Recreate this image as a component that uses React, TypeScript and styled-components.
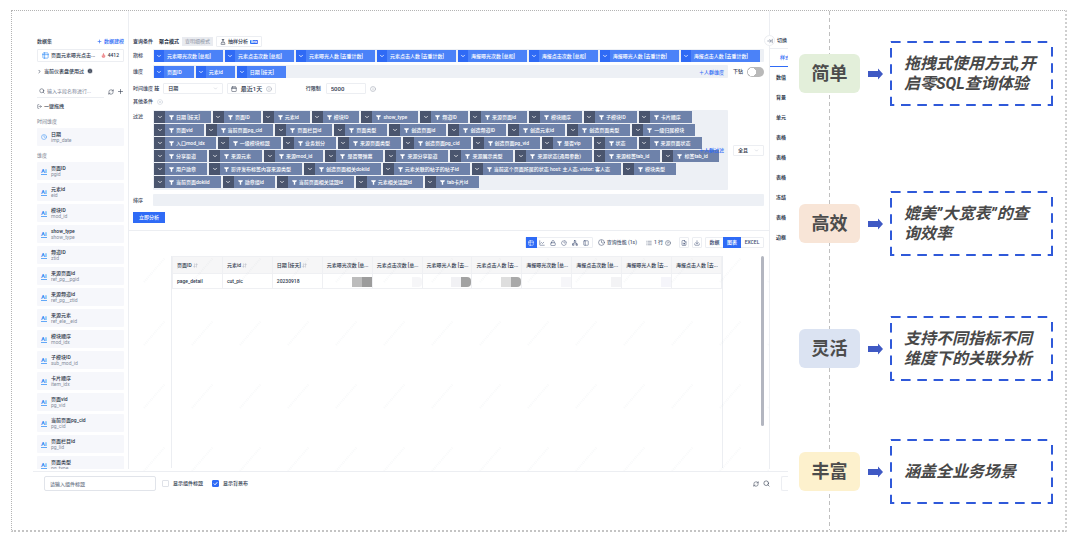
import React from "react";
import styled, { createGlobalStyle, css } from "styled-components";
import {
  Lock, Calendar, ChartLine, ChartPie, ChevronDown, ChevronRight, CircleHelp, CircleX, Clock, Download,
  FileSearch, FlaskConical, Flame, Info, LogOut, PanelLeft, Plus, RefreshCw, Search, Table2, ArrowRightToLine,
  ArrowDownUp, Network, List,
} from "lucide-react";

const GlobalStyle = createGlobalStyle`
  * { box-sizing: border-box; }
  body {
    margin: 0;
    background: #fff;
    color: #303a4e;
    font: 500 5px/7px Roboto, "Noto Sans CJK SC", sans-serif;
  }
  button, input, select { font: inherit; color: inherit; margin: 0; padding: 0; border: 0; background: none; }
  svg { flex: none; display: block; }
`;

const blue = "#2f6bf6";
const line = "#eceef2";

const Frame = styled.main`
  display: flex;
  height: calc(100vh - 24px);
  min-height: 522px;
  margin: 10px 13px 14px 11px;
  border: 1px dotted #b4b4b4;
  border-right: 2px dotted #cfcfcf;
  border-bottom: 2px dotted #c4c4c4;
`;

const Product = styled.section`
  flex: 1;
  min-width: 0;
  display: flex;
  flex-direction: column;
  padding-left: 21px;
`;

const Workspace = styled.div`
  flex: 1;
  min-height: 0;
  display: flex;
`;

/* ---------- field list ---------- */

const Sidebar = styled.aside`
  flex: none;
  width: 96px;
  padding: 25px 4px 0;
  border-right: 1px solid ${line};
  display: flex;
  flex-direction: column;
  min-height: 0;
  margin-bottom: 2px;
  overflow: hidden;
`;

const SideRow = styled.div<{ $h: number; $top?: number }>`
  flex: none;
  display: flex;
  align-items: center;
  gap: 3px;
  height: ${(p) => p.$h}px;
  margin-top: ${(p) => p.$top ?? 0}px;
`;

const Push = styled.span`
  margin-left: auto;
`;

const LinkButton = styled.button`
  display: flex;
  align-items: center;
  gap: 2px;
  color: ${blue};
  white-space: nowrap;
`;

const PlainButton = styled.button`
  display: flex;
  align-items: center;
  gap: 2px;
  white-space: nowrap;
`;

const Dataset = styled(SideRow)`
  border: 1px solid ${line};
  border-radius: 1px;
  padding: 0 4px;
  gap: 2px;
`;

const SearchBox = styled.label`
  display: flex;
  align-items: center;
  gap: 2px;
  width: 67px;
  height: 100%;
  padding-left: 2px;
  border-bottom: 1px solid ${line};
  input { width: 100%; min-width: 0; outline: 0; font-weight: 400; }
  input::placeholder { color: #7b8496; }
`;

const GroupName = styled.h3`
  flex: none;
  margin: 6px 0 3px;
  font: inherit;
  font-weight: 400;
  color: #6d7687;
`;

const FieldList = styled.ul`
  display: flex;
  flex-direction: column;
  gap: 3px;
  margin: 0;
  padding: 0;
  list-style: none;
`;

const Field = styled.button`
  display: flex;
  align-items: center;
  gap: 4px;
  width: 100%;
  height: 18px;
  padding-left: 4px;
  border-radius: 1px;
  background: #f6f7fb;
  text-align: left;
  color: #2b3446;
  line-height: 6px;
  small { display: block; font-size: 5px; font-weight: 400; color: #858d9c; }
`;

const TypeMark = styled.span`
  width: 6px;
  border-bottom: 1px solid #62a8f7;
  color: #3a92f5;
  font-weight: 700;
  font-size: 6px;
  line-height: 6px;
`;

const IconSlot = styled.span`
  width: 6px;
  color: #3a92f5;
`;

/* ---------- query builder ---------- */

const Builder = styled.section`
  flex: 1;
  min-width: 0;
  display: flex;
  flex-direction: column;
  padding-top: 25px;
`;

const Row = styled.div<{ $h?: number; $top?: number }>`
  flex: none;
  display: flex;
  align-items: center;
  min-height: ${(p) => p.$h ?? 13}px;
  margin-top: ${(p) => p.$top ?? 3}px;
  padding: 0 5px 0 4px;
`;

const RowName = styled.span<{ $topAligned?: boolean }>`
  flex: none;
  width: 20px;
  white-space: nowrap;
  color: #3d475b;
  ${(p) => p.$topAligned && css`align-self: flex-start; padding-top: 3px;`}
`;

const Track = styled.div<{ $h?: number }>`
  flex: 1;
  min-width: 0;
  display: flex;
  flex-wrap: wrap;
  align-content: flex-start;
  gap: 1px 2px;
  min-height: ${(p) => p.$h ?? 13}px;
  padding: 1px 1px 0;
  background: #edf0f5;
  border-radius: 1px;
  position: relative;
`;

const Tag = styled.span<{ $filter?: boolean }>`
  flex: none;
  display: flex;
  align-items: center;
  height: 12px;
  background: ${(p) => (p.$filter ? "#6e82aa" : "#4b82f8")};
  color: #fff;
  white-space: nowrap;
  padding-right: ${(p) => (p.$filter ? 11 : 12)}px;
  gap: ${(p) => (p.$filter ? 2 : 0)}px;
  button {
    display: grid;
    place-items: center;
    align-self: stretch;
    width: ${(p) => (p.$filter ? 11 : 10)}px;
    margin-right: ${(p) => (p.$filter ? 2 : 3)}px;
    background: ${(p) => (p.$filter ? "#4a556e" : "#2f6af5")};
  }
`;

const CrowdLink = styled.button`
  position: absolute;
  right: 4px;
  top: 50%;
  transform: translateY(-50%);
  color: ${blue};
  white-space: nowrap;
`;

const Aside = styled.div`
  flex: none;
  display: flex;
  align-items: center;
  justify-content: space-between;
  width: 36px;
  padding-left: 5px;
  white-space: nowrap;
`;

const Switch = styled.input`
  appearance: none;
  width: 17px;
  height: 10px;
  border-radius: 5px;
  background: radial-gradient(circle at 5px 5px, #fff 4px, transparent 4px) #b9b9b9;
`;

const Tab = styled.button<{ $muted?: boolean }>`
  height: 9px;
  padding: 0 3px;
  white-space: nowrap;
  color: ${(p) => (p.$muted ? "#8d94a3" : "#222b3d")};
  background: ${(p) => (p.$muted ? "#e9ebf0" : "#fff")};
  font-weight: ${(p) => (p.$muted ? 400 : 700)};
`;

const Outlined = styled.button<{ $large?: boolean }>`
  display: flex;
  align-items: center;
  gap: 2px;
  height: 11px;
  padding: 0 3px;
  border: 1px solid ${line};
  border-radius: 1px;
  white-space: nowrap;
  font-size: ${(p) => (p.$large ? 6 : 5)}px;
`;

const Beta = styled.em`
  padding: 0 1px;
  border-radius: 1px;
  background: ${blue};
  color: #fff;
  font: 700 3px/4px Roboto, sans-serif;
`;

const SelectBox = styled.label<{ $w: number }>`
  display: flex;
  align-items: center;
  width: ${(p) => p.$w}px;
  height: 11px;
  padding: 0 4px;
  border: 1px solid ${line};
  border-radius: 1px;
  color: #b5bbc7;
  select { flex: 1; min-width: 0; appearance: none; outline: 0; color: #2b3446; font-size: 5px; }
`;

const Limit = styled.label`
  display: flex;
  align-items: center;
  gap: 5px;
  margin: 0 4px 0 30px;
  white-space: nowrap;
  input { width: 40px; height: 11px; padding-left: 4px; border: 1px solid ${line}; border-radius: 1px; font-size: 6px; }
`;

const Run = styled.button`
  width: 32px;
  height: 11px;
  background: ${blue};
  color: #fff;
`;

/* ---------- result ---------- */

const Result = styled.div`
  flex: 1;
  min-height: 0;
  display: flex;
  flex-direction: column;
  gap: 8px;
  margin-top: 7px;
  padding: 6px 5px 3px 4px;
  border-top: 1px solid ${line};
  position: relative;
`;

const Watermark = styled.svg`
  position: absolute;
  left: 0;
  top: 26px;
  width: 100%;
  height: calc(100% - 26px);
  pointer-events: none;
`;

const Toolbar = styled.div`
  flex: none;
  display: flex;
  justify-content: flex-end;
  align-items: center;
  height: 11px;
  white-space: nowrap;
  color: #4d5a75;
`;

const Segments = styled.div`
  display: flex;
  height: 11px;
  border: 1px solid ${line};
  border-radius: 1px;
`;

const Segment = styled.button<{ $on?: boolean; $w: number }>`
  display: grid;
  place-items: center;
  width: ${(p) => p.$w}px;
  height: 11px;
  margin-top: -1px;
  background: ${(p) => (p.$on ? blue : "transparent")};
  color: ${(p) => (p.$on ? "#fff" : "#3c4c72")};
`;

const Note = styled.span<{ $left: number }>`
  display: flex;
  align-items: center;
  gap: 2px;
  margin-left: ${(p) => p.$left}px;
`;

const Spaced = styled.div<{ $left: number }>`
  margin-left: ${(p) => p.$left}px;
`;

const Scroller = styled.div`
  flex: 1;
  min-height: 0;
  display: flex;
  justify-content: space-between;
  padding-left: 38px;
`;

const Sheet = styled.div`
  flex: 1;
  margin-right: 38px;
  border: solid ${line};
  border-width: 0 1px;
  min-width: 0;
`;

const Thumb = styled.div`
  flex: none;
  width: 3px;
  height: 80%;
  border-radius: 2px;
  background: #b3b6c0;
`;

const Table = styled.table`
  width: 100%;
  table-layout: fixed;
  border-collapse: collapse;
  th, td {
    padding: 0 0 0 4px;
    border: 1px solid #eff0f3;
    text-align: left;
    white-space: nowrap;
    overflow: hidden;
  }
  th { height: 17px; background: #f6f6f7; font-weight: 500; }
  td { height: 15px; }
  svg { display: inline-block; vertical-align: -1px; color: #a3a9b5; }
`;

const Masked = styled.span<{ $from: string; $to: string; $round?: boolean }>`
  display: block;
  width: 20px;
  height: 10px;
  margin: 1px 0 0 auto;
  border-radius: ${(p) => (p.$round ? "0 4px 4px 0" : "0")};
  background: linear-gradient(90deg, ${(p) => p.$from} 50%, ${(p) => p.$to} 50%);
`;

/* ---------- style panel ---------- */

const Panel = styled.aside`
  flex: none;
  width: 19px;
  margin-bottom: 2px;
  border-left: 1px solid ${line};
  position: relative;
`;

const Collapse = styled.button`
  position: absolute;
  left: -6px;
  top: 24px;
  display: grid;
  place-items: center;
  width: 11px;
  height: 11px;
  border: 1px solid ${line};
  border-radius: 50%;
  background: #fff;
  color: #4d5a75;
`;

const PanelClip = styled.div`
  overflow: hidden;
  white-space: nowrap;
  padding-top: 25px;
`;

const PanelTitle = styled.div`
  height: 13px;
  padding: 1px 0 0 7px;
  border-bottom: 1px solid ${line};
`;

const PanelTab = styled.button`
  display: block;
  width: 100%;
  height: 18px;
  padding-left: 10px;
  border-bottom: 1px solid ${blue};
  color: ${blue};
  text-align: left;
`;

const PanelList = styled.ul`
  display: grid;
  gap: 13px;
  margin: 0;
  padding: 7px 0 0 6px;
  list-style: none;
  font-weight: 700;
`;

/* ---------- footer ---------- */

const Footer = styled.footer`
  flex: none;
  display: flex;
  align-items: flex-start;
  height: 59px;
  padding: 4px 0 0 11px;
  border-top: 1px solid ${line};
`;

const TitleInput = styled.input`
  width: 112px;
  height: 15px;
  padding-left: 5px;
  border: 1px solid #e1e4ea;
  border-radius: 2px;
  &::placeholder { color: #6d7687; }
`;

const Check = styled.label`
  display: flex;
  align-items: center;
  gap: 4px;
  height: 15px;
  margin-left: 6px;
  & + & { margin-left: 9px; }
  span { position: relative; display: grid; place-items: center; }
  svg { position: absolute; color: #fff; }
  input { appearance: none; width: 7px; height: 7px; border: 1px solid #dfe2e8; border-radius: 1px; }
  input:checked { border-color: ${blue}; background: ${blue}; }
`;

const FooterIcons = styled.div`
  display: flex;
  align-items: center;
  gap: 4px;
  height: 15px;
  margin-left: auto;
  button { display: block; }
`;

const Stub = styled.span`
  width: 7px;
  height: 15px;
  margin-left: 11px;
  border: 1px solid ${line};
  border-right: 0;
  border-radius: 2px 0 0 2px;
`;

/* ---------- callouts ---------- */

const Callouts = styled.section`
  flex: none;
  width: 277px;
  display: flex;
  flex-direction: column;
  padding: 30px 12px 0 11px;
  background: repeating-linear-gradient(#bfbfbf 0 4px, transparent 4px 7px) 41px 0 / 1px 100% no-repeat;
`;

const Callout = styled.div<{ $top?: number }>`
  display: flex;
  align-items: center;
  height: 65px;
  margin-top: ${(p) => p.$top ?? 0}px;
`;

const Pill = styled.h2<{ $bg: string }>`
  flex: none;
  display: flex;
  justify-content: center;
  width: 61px;
  height: 39px;
  margin: 0;
  padding-top: 6px;
  border-radius: 6px;
  background: ${(p) => p.$bg};
  color: #4c4c4c;
  font: 700 18px/24px "Noto Sans CJK SC", sans-serif;
`;

const Arrow = styled.svg`
  margin: 0 7px 0 8px;
`;

const Quote = styled.p`
  flex: 1;
  display: flex;
  align-items: center;
  height: 65px;
  margin: 0;
  padding-left: 14px;
  white-space: pre-line;
  color: #484848;
  font: italic 700 16px/20px Roboto, "Noto Sans CJK SC", sans-serif;
  background:
    linear-gradient(90deg, #2f59d9 60%, transparent 60%) 1px 0 / 10% 2px repeat-x,
    linear-gradient(90deg, #2f59d9 60%, transparent 60%) 11px 100% / 10% 2px repeat-x,
    linear-gradient(#2f59d9 60%, transparent 60%) 0 7px / 2px 25% repeat-y,
    linear-gradient(#2f59d9 60%, transparent 60%) 100% 6px / 2px 25% repeat-y;
`;

const metrics = [
  "元素曝光次数 [总和]", "元素点击次数 [总和]", "元素曝光人数 [去重计数]", "元素点击人数 [去重计数]",
  "海报曝光次数 [总和]", "海报点击次数 [总和]", "海报曝光人数 [去重计数]", "海报点击人数 [去重计数]",
];
const dimensions = ["页面ID", "元素id", "日期 [按天]"];
const filters = [
  "日期 [按天]", "页面ID", "元素id", "模块ID", "show_type", "频道ID", "来源页面id", "模块顺序", "子模块ID", "卡片顺序",
  "页面vid", "当前页面pg_cid", "页面栏目id", "页面类型", "创造页面id", "创造频道ID", "创造元素id", "创造页面类型", "一级归属模块",
  "入口mod_idx", "一级模块标题", "业务划分", "来源页面类型", "创造页面pg_cid", "创造页面pg_vid", "是否vip", "状态", "来源页面状态",
  "分享渠道", "来源元素", "来源mod_id", "是否带弹幕", "来源分享渠道", "来源展示类型", "来源状态(通用参数)", "来源标签tab_id", "标签tab_id",
  "用户勋章", "影评发布标签内容来源类型", "创造页面相关dokiid", "元素关联的帖子的帖子id", "当前这个页面所属的状态 host: 主人态, vistor: 客人态", "模块类型",
  "当前页面dokiid", "勋章组id", "当前页面相关话题id", "元素相关话题id", "tab卡片id",
];
const fields: [string, string][] = [
  ["页面ID", "pgid"], ["元素id", "eid"], ["模块ID", "mod_id"], ["show_type", "show_type"], ["频道ID", "ztid"],
  ["来源页面id", "ref_pg__pgid"], ["来源频道id", "ref_pg__ztid"], ["来源元素", "ref_ele__eid"], ["模块顺序", "mod_idx"],
  ["子模块ID", "sub_mod_id"], ["卡片顺序", "item_idx"], ["页面vid", "pg_vid"], ["当前页面pg_cid", "pg_cid"],
  ["页面栏目id", "pg_lid"], ["页面类型", "pg_type"],
];
const sortable = ["页面ID", "元素id", "日期 [按天]"];
const measured = [
  "元素曝光次数 [总...", "元素点击次数 [总...", "元素曝光人数 [去...", "元素点击人数 [去...",
  "海报曝光次数 [总...", "海报点击次数 [总...", "海报曝光人数 [去...", "海报点击人数 [去...",
];
const masks: [string, string, boolean][] = [
  ["#bcbcbc", "#9c9c9c", false], ["#fff", "#f6f6f8", true], ["#f1f1f4", "#a2a2a2", true], ["#dedede", "#a9a9a9", true],
  ["#fff", "#f6f6f9", false], ["#fff", "#f3f3f5", false], ["#fff", "#f5f5fa", false], ["#fff", "#fff", false],
];
const styleItems = ["数值", "背景", "单元", "表格", "表格", "表格", "冻结", "表格", "边框"];
const callouts = [
  { name: "简单", bg: "#e3efda", top: 0, text: "拖拽式使用方式,开\n启零SQL查询体验" },
  { name: "高效", bg: "#f8e5d7", top: 85, text: "媲美”大宽表”的查\n询效率" },
  { name: "灵活", bg: "#dbe3f2", top: 60, text: "支持不同指标不同\n维度下的关联分析" },
  { name: "丰富", bg: "#fdf1cd", top: 58, text: "涵盖全业务场景" },
];

const Funnel = () => (
  <svg width="5" height="5" viewBox="0 0 10 10" fill="#fff" aria-hidden>
    <path d="M0.5 0.5h9v2L6.4 4.500V9.500H3.600V4.500L0.500 2.500z" />
  </svg>
);

const TagItem = ({ text, filter }: { text: string; filter?: boolean }) => (
  <Tag $filter={filter}>
    <button aria-label={`${text} 选项`}><ChevronDown size={6} strokeWidth={3} /></button>
    {filter && <Funnel />}
    {text}
  </Tag>
);

const FieldSidebar = () => (
  <Sidebar>
    <SideRow $h={10}>
      <span>数据集</span>
      <Push><LinkButton><Plus size={5} strokeWidth={3} />数据建模</LinkButton></Push>
    </SideRow>
    <Dataset $h={13} $top={3}>
      <Table2 size={7} color="#2f8bf6" />
      <span>页面元素曝光点击...</span>
      <Push><Flame size={5} color="#e5484d" fill="#f3a0a3" /></Push>
      <span>4412</span>
    </Dataset>
    <SideRow $h={10} $top={4}>
      <PlainButton><ChevronRight size={5} strokeWidth={3} />当前仪表盘使用过</PlainButton>
      <Info size={6} fill="#303a4e" stroke="#fff" />
    </SideRow>
    <SideRow $h={13} $top={9}>
      <SearchBox>
        <Search size={6} />
        <input aria-label="搜索字段" placeholder="输入字段名称进行..." />
      </SearchBox>
      <Push><PlainButton aria-label="刷新"><RefreshCw size={6} /></PlainButton></Push>
      <PlainButton aria-label="新增"><Plus size={7} /></PlainButton>
    </SideRow>
    <SideRow $h={11} $top={3}>
      <PlainButton><LogOut size={5} />一键拖拽</PlainButton>
    </SideRow>
    <GroupName>时间维度</GroupName>
    <FieldList>
      <li><Field><IconSlot><Clock size={6} /></IconSlot><span>日期<small>imp_date</small></span></Field></li>
    </FieldList>
    <GroupName>维度</GroupName>
    <FieldList>
      {fields.map(([name, code]) => (
        <li key={name}><Field><TypeMark>Ai</TypeMark><span>{name}<small>{code}</small></span></Field></li>
      ))}
    </FieldList>
  </Sidebar>
);

const viewIcons = [Table2, ChartLine, Lock, ChartPie, Network, PanelLeft];

const ResultArea = () => (
  <Result>
    <Toolbar>
      <Segments>
        {viewIcons.map((Icon, i) => (
          <Segment key={i} $w={11} $on={i === 0} aria-label={`视图 ${i + 1}`}><Icon size={6} /></Segment>
        ))}
      </Segments>
      <Note $left={5}><Clock size={7} />查询性能 (1s)</Note>
      <Note $left={9}><List size={6} />1 行<CircleHelp size={6} /></Note>
      <Spaced $left={8}><Segments><Segment $w={8} aria-label="查看"><FileSearch size={6} /></Segment></Segments></Spaced>
      <Spaced $left={3}><Segments><Segment $w={8} aria-label="下载"><Download size={6} /></Segment></Segments></Spaced>
      <Spaced $left={3}>
        <Segments>
          <Segment $w={17}>数据</Segment>
          <Segment $w={18} $on>图表</Segment>
          <Segment $w={22}>EXCEL</Segment>
        </Segments>
      </Spaced>
    </Toolbar>
    <Scroller>
      <Sheet>
        <Table>
          <thead>
            <tr>
              {sortable.map((t) => <th key={t}>{t} <ArrowDownUp size={5} /></th>)}
              {measured.map((t) => <th key={t}>{t}</th>)}
            </tr>
          </thead>
          <tbody>
            <tr>
              <td>page_detail</td><td>cut_pic</td><td>20230918</td>
              {masks.map(([from, to, round], i) => (
                <td key={i}><Masked $from={from} $to={to} $round={round} /></td>
              ))}
            </tr>
          </tbody>
        </Table>
      </Sheet>
      <Thumb />
    </Scroller>
    <Watermark aria-hidden>
      <defs>
        <pattern id="wm" x="14" y="0" width="48" height="63" patternUnits="userSpaceOnUse">
          <path d="M1 25L22 1" stroke="#8890a0" strokeOpacity="0.06" strokeWidth="2" strokeDasharray="1 1" />
        </pattern>
      </defs>
      <rect width="100%" height="100%" fill="url(#wm)" />
    </Watermark>
  </Result>
);

const QueryBuilder = () => (
  <Builder>
    <Row $h={10} $top={0}>
      <RowName><b>查询条件</b></RowName>
      <Spaced $left={3}><Tab>聚合模式</Tab><Tab $muted>查明细模式</Tab></Spaced>
      <Spaced $left={3}><Outlined><FlaskConical size={6} />抽样分析<Beta>Beta</Beta></Outlined></Spaced>
    </Row>
    <Row $top={2}>
      <RowName>指标</RowName>
      <Track>{metrics.map((t) => <TagItem key={t} text={t} />)}</Track>
    </Row>
    <Row>
      <RowName>维度</RowName>
      <Track>
        {dimensions.map((t) => <TagItem key={t} text={t} />)}
        <CrowdLink>＋人群维度</CrowdLink>
      </Track>
      <Aside as="label">下钻<Switch type="checkbox" role="switch" /></Aside>
    </Row>
    <Row $h={11} $top={5}>
      <RowName>时间维度</RowName>
      <b>&nbsp;按</b>
      <Spaced $left={4}>
        <SelectBox $w={60}>
          <select aria-label="时间维度"><option>日期</option></select>
          <ChevronDown size={5} />
        </SelectBox>
      </Spaced>
      <Spaced $left={4}><Outlined $large><Calendar size={6} />&nbsp;最近1天&nbsp;<Info size={6} color="#9aa1af" /></Outlined></Spaced>
      <Limit>行限制<input defaultValue="5000" /></Limit>
      <Info size={6} color="#9aa1af" />
    </Row>
    <Row $h={7} $top={4}>
      <RowName>其他条件</RowName>
      <Spaced $left={4}><CircleX size={6} color="#c5cad4" /></Spaced>
    </Row>
    <Row $top={5}>
      <RowName $topAligned>过滤</RowName>
      <Track $h={80}>
        {filters.map((t) => <TagItem key={t} text={t} filter />)}
        <CrowdLink>＋人群过滤</CrowdLink>
      </Track>
      <Aside>
        <SelectBox $w={31}>
          <select aria-label="过滤关系"><option>全且</option></select>
          <ChevronDown size={5} />
        </SelectBox>
      </Aside>
    </Row>
    <Row $h={12} $top={4}>
      <RowName>排序</RowName>
      <Track $h={12} />
    </Row>
    <Row $h={11} $top={6}><Run>立即分析</Run></Row>
    <ResultArea />
  </Builder>
);

const StylePanel = () => (
  <Panel>
    <PanelClip>
      <PanelTitle>切换</PanelTitle>
      <PanelTab>样式</PanelTab>
      <PanelList>{styleItems.map((t, i) => <li key={i}>{t}</li>)}</PanelList>
    </PanelClip>
    <Collapse aria-label="收起"><ArrowRightToLine size={6} /></Collapse>
  </Panel>
);

export default function App() {
  return (
    <>
      <GlobalStyle />
      <Frame>
        <Product>
          <Workspace>
            <FieldSidebar />
            <QueryBuilder />
            <StylePanel />
          </Workspace>
          <Footer>
            <TitleInput aria-label="组件标题" placeholder="请输入组件标题" />
            <Check><span><input type="checkbox" /></span>显示组件标题</Check>
            <Check>
              <span>
                <input type="checkbox" defaultChecked />
                <svg width="5" height="5" viewBox="0 0 10 10" fill="none" stroke="currentColor" strokeWidth="2" aria-hidden>
                  <path d="M1.5 5l2.5 2.5L8.5 2.5" />
                </svg>
              </span>
              显示背景布
            </Check>
            <FooterIcons>
              <button aria-label="刷新"><RefreshCw size={6} /></button>
              <button aria-label="查看"><Search size={7} /></button>
            </FooterIcons>
            <Stub />
          </Footer>
        </Product>
        <Callouts>
          {callouts.map((c) => (
            <Callout key={c.name} $top={c.top}>
              <Pill $bg={c.bg}>{c.name}</Pill>
              <Arrow width="15" height="12" viewBox="0 0 15 12" fill="#3f59c4" aria-hidden>
                <path d="M0 3h10V0.5L15 6l-5 5.500V9H0z" />
              </Arrow>
              <Quote>{c.text}</Quote>
            </Callout>
          ))}
        </Callouts>
      </Frame>
    </>
  );
}
